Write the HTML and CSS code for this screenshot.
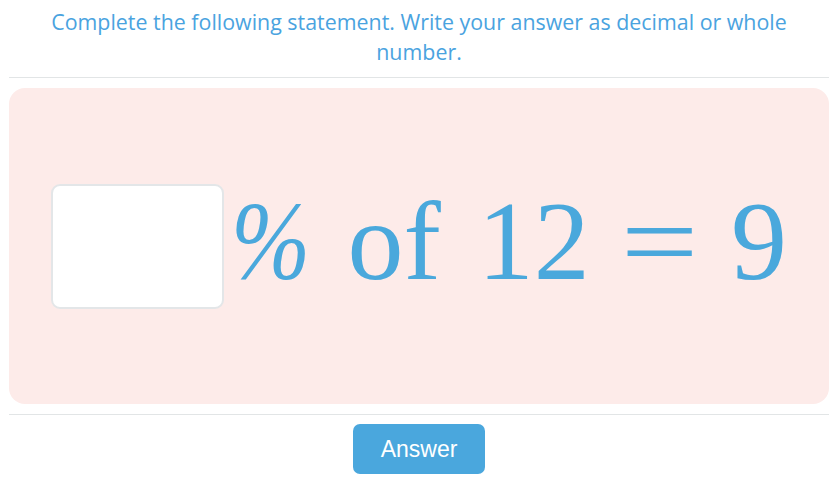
FILE: index.html
```html
<!DOCTYPE html>
<html lang="en">
<head>
    <meta charset="UTF-8">
    <meta name="viewport" content="width=device-width, initial-scale=1.0">
    <title>Percent Question</title>
    <link rel="stylesheet" href="styles.css">
</head>
<body>
    <div class="page">
        <div class="question">
            Complete the following statement. Write your answer as decimal or whole number.
        </div>
        <hr class="divider">
        <div class="problem">
            <input type="text" class="answer-box" aria-label="Answer">
            <div class="math">
                <span class="percent">%</span>
                <span>of</span>
                <span>12</span>
                <span class="equals">=</span>
                <span>9</span>
            </div>
        </div>
        <hr class="divider">
        <div class="actions">
            <button class="answer-btn">Answer</button>
        </div>
    </div>
</body>
</html>
```

FILE: styles.css
```css
body {
    margin: 0;
    background-color: #ffffff;
    font-family: "Open Sans", Arial, sans-serif;
}

.page {
    width: 820px;
    padding-left: 9px;
}

.question {
    color: #4aa3df;
    font-size: 21.4px;
    line-height: 30px;
    text-align: center;
    padding: 7px 30px 10px 30px;
}

.divider {
    border: 0;
    border-top: 1px solid #e2e5e6;
    margin: 0;
}

.problem {
    display: flex;
    align-items: center;
    justify-content: center;
    height: 316px;
    margin: 10px 0;
    background-color: #fdebe9;
    border-radius: 16px;
}

.answer-box {
    width: 169px;
    height: 121px;
    padding: 0;
    border: 2px solid #e3e6e8;
    border-radius: 9px;
    background-color: #ffffff;
    margin-right: 7px;
}

.math {
    display: flex;
    align-items: baseline;
    gap: 37px;
    margin-bottom: 10px;
    font-family: "Liberation Serif", "Times New Roman", serif;
    font-size: 112px;
    color: #4aa8dc;
    white-space: nowrap;
}

.percent {
    display: inline-block;
    font-style: italic;
    transform: scaleX(0.85);
    transform-origin: left;
    margin-right: -14px;
}

.equals {
    display: inline-block;
    transform: scaleX(1.23);
    margin: 0 3px 0 1px;
}

.actions {
    display: flex;
    justify-content: center;
    padding-top: 9px;
}

.answer-btn {
    width: 132px;
    height: 50px;
    border: 0;
    border-radius: 7px;
    background-color: #4aa7dd;
    color: #ffffff;
    font-family: "Liberation Sans", Arial, sans-serif;
    font-size: 23px;
    cursor: pointer;
}
```
